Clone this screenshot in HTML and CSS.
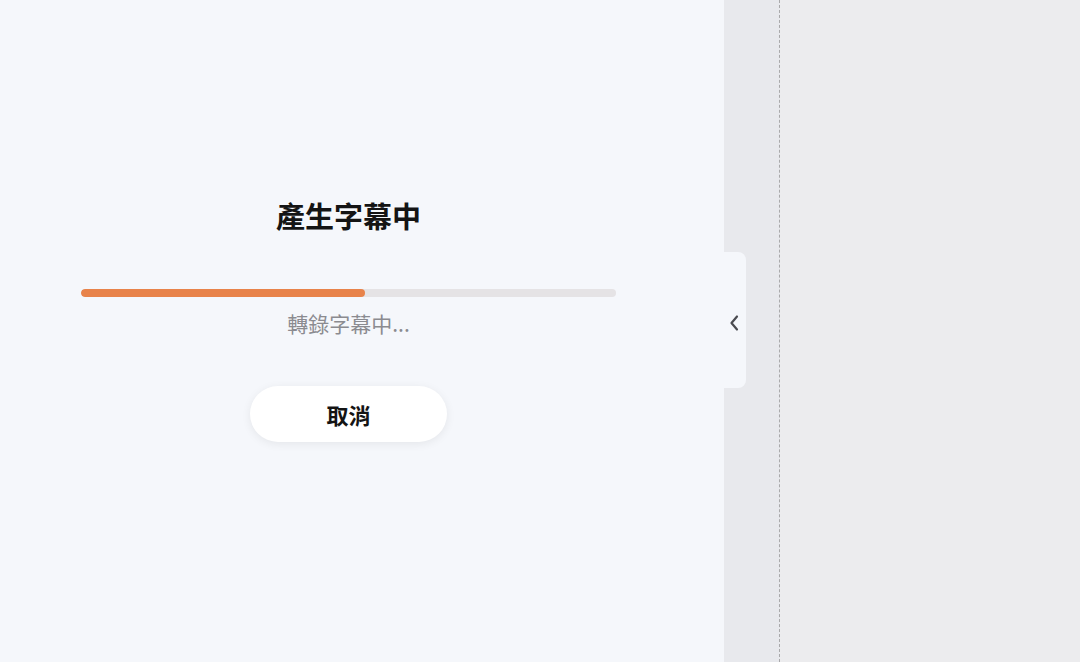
FILE: index.html
```html
<!DOCTYPE html>
<html lang="zh-Hant">
<head>
<meta charset="utf-8">
<link rel="stylesheet" href="styles.css">
</head>
<body>
<div class="app">
  <section class="panel">
    <div class="content">
      <h1 class="title">產生字幕中</h1>
      <div class="progress">
        <div class="progress-fill" style="width:53%"></div>
      </div>
      <p class="status">轉錄字幕中...</p>
      <button class="cancel">取消</button>
    </div>
    <div class="tab">
      <svg width="12" height="18" viewBox="0 0 12 18"><path d="M9 2.5 L3.5 9 L9 15.5" fill="none" stroke="#4a4b50" stroke-width="2.2" stroke-linecap="round" stroke-linejoin="round"/></svg>
    </div>
  </section>
  <div class="gutter"></div>
  <div class="canvas"></div>
</div>
</body>
</html>
```
FILE: styles.css
```css
* { box-sizing: border-box; }
html, body { margin: 0; padding: 0; height: 100%; }
body {
  font-family: "Noto Sans CJK TC", "Noto Sans", sans-serif;
  background: #ececee;
}
.app { display: flex; height: 662px; }
.panel {
  position: relative;
  width: 724px;
  flex: none;
  background: #f5f7fb;
}
.content {
  width: 535px;
  margin-left: 81px;
  padding-top: 194px;
  display: flex;
  flex-direction: column;
  align-items: center;
}
.title {
  margin: 0;
  font-size: 29px;
  font-weight: 700;
  line-height: 42px;
  color: #141414;
}
.progress {
  margin-top: 53px;
  width: 100%;
  height: 8px;
  border-radius: 4px;
  background: #e5e3e5;
  overflow: hidden;
}
.progress-fill {
  height: 100%;
  background: #e8834a;
  border-radius: 4px;
}
.status {
  margin: 11px 0 0;
  font-size: 21px;
  line-height: 30px;
  color: #8b8b90;
}
.cancel {
  margin-top: 48px;
  width: 197px;
  height: 56px;
  border: none;
  border-radius: 28px;
  background: #ffffff;
  box-shadow: 0 2px 10px rgba(0,0,0,0.07);
  font-family: inherit;
  font-size: 22px;
  font-weight: 700;
  color: #141414;
}
.tab {
  position: absolute;
  left: 724px;
  top: 252px;
  width: 22px;
  height: 136px;
  background: #f5f7fb;
  border-radius: 0 8px 8px 0;
  display: flex;
  align-items: center;
  justify-content: center;
  padding-right: 2px;
  padding-top: 6px;
  z-index: 2;
}
.gutter {
  width: 56px;
  flex: none;
  background: #e8e9ed;
  border-right: 1px dashed #a9a9ab;
}
.canvas { flex: 1; background: #ececee; }
```
